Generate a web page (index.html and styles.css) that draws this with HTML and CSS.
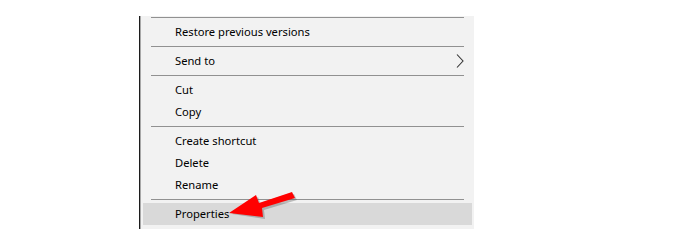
FILE: index.html
```html
<!DOCTYPE html>
<html>
<head>
<meta charset="utf-8">
<link rel="stylesheet" href="styles.css">
</head>
<body>
<div class="stage">
  <div class="menu">
    <div class="menu-inner">
      <div class="sep first"></div>
      <div class="item">Restore previous versions</div>
      <div class="sep"></div>
      <div class="item has-sub">Send to
        <svg class="chev" width="8" height="14" viewBox="0 0 8 14"><path d="M1 0.5 L7 7 L1 13.5" fill="none" stroke="#333" stroke-width="1.1"/></svg>
      </div>
      <div class="sep"></div>
      <div class="item">Cut</div>
      <div class="item">Copy</div>
      <div class="sep"></div>
      <div class="item">Create shortcut</div>
      <div class="item">Delete</div>
      <div class="item">Rename</div>
      <div class="sep"></div>
      <div class="item hover">Properties</div>
    </div>
  </div>
  <svg class="arrow" width="700" height="250" viewBox="0 0 700 250">
    <polygon points="232,214 258,197 261,205 294,194 297,200 264,210 265,219" fill="#555" opacity="0.35"/>
    <polygon points="229,213 256,195 259,203 292,192 295,198 262,208 263,217" fill="#f00"/>
  </svg>
</div>
</body>
</html>
```
FILE: styles.css
```css
html, body {
  margin: 0;
  background: #fff;
}
.stage {
  position: relative;
  width: 700px;
  height: 250px;
  padding: 16px 0 0 139px;
  box-sizing: border-box;
  font-family: "Noto Sans", "DejaVu Sans", sans-serif;
  font-size: 11.2px;
  color: #000;
}
.menu {
  display: inline-block;
  border-left: 1px solid #1c1c1c;
}
.menu-inner {
  width: 329px;
  border-left: 1px solid #a8a8a8;
  background: #f2f2f2;
  padding: 1px 2px 4px 2px;
}
.sep {
  height: 1px;
  background: #919191;
  margin: 3px 8px;
}
.sep.first {
  margin-top: 0;
}
.item {
  height: 22px;
  line-height: 22px;
  padding-left: 32px;
  display: flex;
  align-items: center;
  justify-content: space-between;
  padding-right: 8px;
}
.item.hover {
  background: #d9d9d9;
}
.chev {
  display: block;
}
.arrow {
  position: absolute;
  left: 0;
  top: 0;
}
```
